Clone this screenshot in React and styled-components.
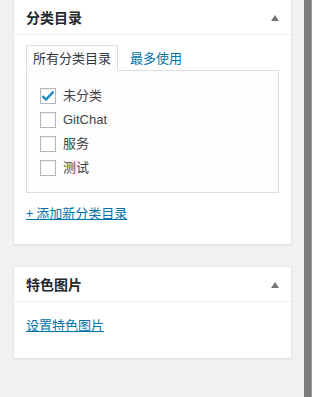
import React from "react";
import styled, { createGlobalStyle } from "styled-components";

const Global = createGlobalStyle`
  html, body { margin: 0; padding: 0; background: #f1f1f1; }
  body {
    font-family: "Liberation Sans", Arial, "Noto Sans CJK SC", sans-serif;
    font-size: 13px;
    color: #444;
    overflow: hidden;
  }
`;

const Screen = styled.div`
  display: flex;
  width: 312px;
  height: 397px;
  overflow: hidden;
`;

const Column = styled.div`
  width: 279px;
  padding-left: 13px;
  display: flex;
  flex-direction: column;
  gap: 21px;
`;

const Gutter = styled.div`
  width: 12px;
`;

const Scrollbar = styled.div`
  width: 7px;
  background: #7b7b7b;
  border-right: 1px solid #9a9a9a;
`;

const Panel = styled.section`
  background: #fff;
  border: 1px solid #e5e5e5;
  box-shadow: 0 1px 1px rgba(0, 0, 0, 0.04);
  margin-top: ${(p) => (p.$first ? "-1px" : "0")};
`;

const Header = styled.div`
  height: 34px;
  display: flex;
  align-items: center;
  justify-content: space-between;
  padding: 0 12px;
  border-bottom: 1px solid #eee;
`;

const Title = styled.h2`
  margin: 0;
  font-size: 14px;
  line-height: 20px;
  font-weight: 600;
  color: #23282d;
  font-family: "Noto Sans CJK SC", sans-serif;
`;

const Toggle = styled.span`
  width: 0;
  height: 0;
  border-left: 4px solid transparent;
  border-right: 4px solid transparent;
  border-bottom: 6px solid #72777c;
  margin-top: 1px;
`;

const Inside = styled.div`
  padding: ${(p) => p.$pad};
`;

const Tabs = styled.ul`
  list-style: none;
  margin: 0;
  padding: 0;
  display: flex;
  align-items: flex-end;
  height: 26px;
`;

const Tab = styled.li`
  height: 26px;
  box-sizing: border-box;
  display: flex;
  align-items: center;
  padding: 0 6px;
  margin-left: ${(p) => (p.$active ? "0" : "5px")};
  margin-bottom: -1px;
  border: 1px solid ${(p) => (p.$active ? "#ddd" : "transparent")};
  border-bottom: 1px solid ${(p) => (p.$active ? "#fdfdfd" : "transparent")};
  background: ${(p) => (p.$active ? "#fdfdfd" : "transparent")};
  color: ${(p) => (p.$active ? "#32373c" : "#0073aa")};
  font-family: "Noto Sans CJK SC", sans-serif;
  font-size: 13px;
  line-height: 18px;
  position: relative;
  z-index: 1;
`;

const TabPanel = styled.div`
  border: 1px solid #ddd;
  background: #fdfdfd;
  padding: 17px 13px 16px;
  display: flex;
  flex-direction: column;
  gap: 8px;
`;

const Item = styled.label`
  display: flex;
  align-items: center;
  gap: 7px;
  height: 16px;
  line-height: 16px;
  color: #444;
  font-family: "Liberation Sans", Arial, "Noto Sans CJK SC", sans-serif;
  font-size: 13px;
`;

const Box = styled.span`
  flex: none;
  width: 16px;
  height: 16px;
  box-sizing: border-box;
  border: 1px solid #b4b9be;
  background: #fff;
  box-shadow: inset 0 1px 2px rgba(0, 0, 0, 0.07);
  display: flex;
  align-items: center;
  justify-content: center;
`;

const Link = styled.a`
  color: #0073aa;
  text-decoration: underline;
  font-family: "Noto Sans CJK SC", sans-serif;
  font-size: 13px;
  line-height: 18px;
  display: inline-block;
`;

const LinkRow = styled.div`
  margin-top: ${(p) => p.$gap || 0}px;
`;

const Check = () => (
  <svg width="14" height="14" viewBox="0 0 14 14">
    <path d="M1.5 7.2 L5 10.6 L12.5 2.6" fill="none" stroke="#1e8cbe" strokeWidth="2.4" />
  </svg>
);

const items = [
  { label: "未分类", checked: true },
  { label: "GitChat" },
  { label: "服务" },
  { label: "测试" },
];

export default function App() {
  return (
    <Screen>
      <Global />
      <Column>
        <Panel $first>
          <Header>
            <Title>分类目录</Title>
            <Toggle />
          </Header>
          <Inside $pad="9px 12px 22px">
            <Tabs>
              <Tab $active>所有分类目录</Tab>
              <Tab>最多使用</Tab>
            </Tabs>
            <TabPanel>
              {items.map((it) => (
                <Item key={it.label}>
                  <Box>{it.checked && <Check />}</Box>
                  <span>{it.label}</span>
                </Item>
              ))}
            </TabPanel>
            <LinkRow $gap={11}>
              <Link href="#">+ 添加新分类目录</Link>
            </LinkRow>
          </Inside>
        </Panel>
        <Panel>
          <Header>
            <Title>特色图片</Title>
            <Toggle />
          </Header>
          <Inside $pad="14px 12px 24px">
            <Link href="#">设置特色图片</Link>
          </Inside>
        </Panel>
      </Column>
      <Gutter />
      <Scrollbar />
    </Screen>
  );
}
